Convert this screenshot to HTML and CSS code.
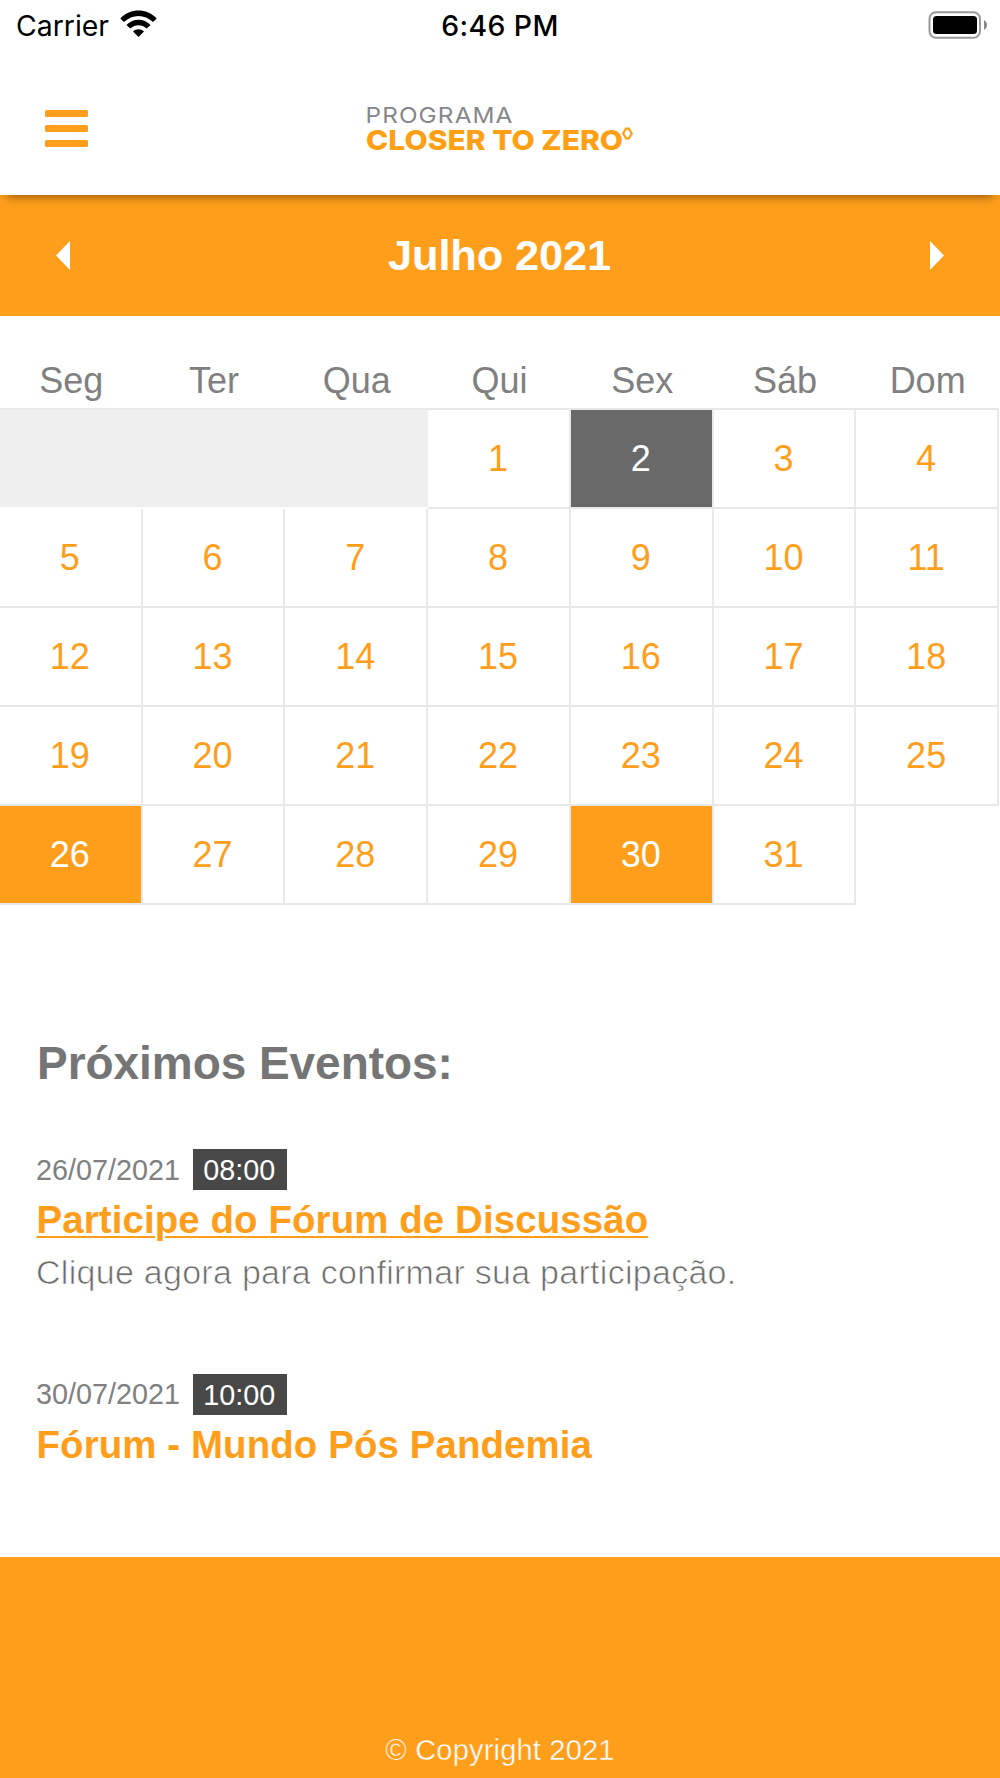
FILE: index.html
```html
<!DOCTYPE html>
<html lang="pt-BR">
<head>
<meta charset="utf-8">
<title>Programa Closer to Zero</title>
<link rel="stylesheet" href="styles.css">
</head>
<body>
<header class="header">
  <div class="status">
    <div class="carrier">
      <span>Carrier</span>
      <svg class="wifi" width="37" height="28" viewBox="0 0 37 28">
        <path d="M0.3 8.4C10.5-2 26.5-2 36.7 8.4L33 12.1C24.7 3.9 12.3 3.9 4 12.1Z"/>
        <path d="M6.5 14.9C13.3 8 23.7 8 30.5 14.9L26.7 18.6C22 14.1 15 14.1 10.3 18.6Z"/>
        <path d="M13 21.4C16.2 18.4 20.8 18.4 24 21.4L18.5 26.9Z"/>
      </svg>
    </div>
    <div class="clock">6:46 PM</div>
    <svg class="battery" width="60" height="28" viewBox="0 0 60 28">
      <rect x="1.5" y="1.2" width="50.5" height="25.6" rx="6.5" fill="none" stroke="#999" stroke-width="2"/>
      <rect x="5" y="5" width="44" height="18" rx="3.5"/>
      <path d="M56 9C60 11.5 60 16.5 56 19Z" fill="#888"/>
    </svg>
  </div>
  <nav class="navbar">
    <button class="menu" aria-label="Menu"><i></i><i></i><i></i></button>
    <svg class="logo" width="270" height="56" viewBox="0 0 270 56">
      <text class="logo-top" x="-1.5" y="22.5" textLength="148" lengthAdjust="spacingAndGlyphs">PROGRAMA</text>
      <text class="logo-main" x="-1" y="50" textLength="257" lengthAdjust="spacingAndGlyphs">CLOSER TO ZERO</text>
      <path d="M259 28.700H261.900L264.700 33.500L261.900 38.300H259L256.200 33.500Z" fill="none" stroke="#ff9f13" stroke-width="2.2"/>
    </svg>
  </nav>
</header>
<main>
  <div class="month">
    <svg width="14" height="29" viewBox="0 0 14 29"><path d="M14 0V29L0 14.5Z"/></svg>
    <h1>Julho 2021</h1>
    <svg width="14" height="29" viewBox="0 0 14 29"><path d="M0 0V29L14 14.5Z"/></svg>
  </div>
  <section class="calendar">
    <div class="weekdays"><span>Seg</span><span>Ter</span><span>Qua</span><span>Qui</span><span>Sex</span><span>Sáb</span><span>Dom</span></div>
    <div class="days">
      <span class="blank"></span><span>1</span><span class="today">2</span><span>3</span><span>4</span>
      <span>5</span><span>6</span><span>7</span><span>8</span><span>9</span><span>10</span><span>11</span>
      <span>12</span><span>13</span><span>14</span><span>15</span><span>16</span><span>17</span><span>18</span>
      <span>19</span><span>20</span><span>21</span><span>22</span><span>23</span><span>24</span><span>25</span>
      <span class="busy">26</span><span>27</span><span>28</span><span>29</span><span class="busy">30</span><span>31</span>
    </div>
  </section>
  <section class="events">
    <h2>Próximos Eventos:</h2>
    <article class="event">
      <div class="when"><span>26/07/2021</span><time>08:00</time></div>
      <h3><a href="#">Participe do Fórum de Discussão</a></h3>
      <p>Clique agora para confirmar sua participação.</p>
    </article>
    <article class="event">
      <div class="when"><span>30/07/2021</span><time>10:00</time></div>
      <h3>Fórum - Mundo Pós Pandemia</h3>
    </article>
  </section>
</main>
<footer class="footer">© Copyright 2021</footer>
</body>
</html>
```
FILE: styles.css
```css
* { box-sizing: border-box; }

body {
  margin: 0;
  height: 1778px;
  display: flex;
  flex-direction: column;
  overflow: hidden;
  background: #fff;
  color: #808080;
  font-family: "Liberation Sans", Arial, sans-serif;
}

h1, h2, h3, p { margin: 0; }

main { flex: 1 1 0; min-height: 0; }

/* Header */
.header {
  position: relative;
  flex: none;
  height: 195px;
  background: #fff;
  box-shadow: 0 8px 10px -7px rgba(0, 0, 0, .5);
}

.status {
  display: grid;
  grid-template-columns: 1fr auto 1fr;
  align-items: center;
  height: 50px;
  padding: 1px 14px 0 16px;
  color: #000;
  font: 400 28.4px/50px Inter, sans-serif;
}

.carrier { display: flex; align-items: center; gap: 11px; }
.wifi { margin-top: -4px; }
.clock { margin-left: -2px; font-weight: 550; letter-spacing: .4px; }
.battery { justify-self: end; margin: -3px -2px 0 0; }

.navbar {
  display: flex;
  align-items: flex-start;
  gap: 279px;
  padding: 50px 45px 0;
}

.menu {
  display: flex;
  flex-direction: column;
  gap: 8px;
  width: 43px;
  margin-top: 10px;
  padding: 0;
  border: 0;
  background: none;
}
.menu i { width: 43px; height: 7px; border-radius: 1.5px; background: #ff9e1b; }

.logo { overflow: visible; }
.logo-top { font: 400 22px Inter, sans-serif; letter-spacing: 1px; fill: #86868a; }
.logo-main { font: 800 27.6px Inter, sans-serif; fill: #ff9f13; }

/* Calendar */
.month {
  display: flex;
  align-items: center;
  justify-content: space-between;
  height: 120.5px;
  padding: 0 56px;
  background: #ff9e1b;
  color: #fff;
  fill: #fff;
}
.month h1 { padding: 0 1px 1px 0; font-size: 43.4px; line-height: 50px; letter-spacing: -.15px; }

.calendar { width: 999px; }

.weekdays {
  display: grid;
  grid-template-columns: repeat(7, 1fr);
  height: 92.5px;
  padding-top: 44px;
  text-align: center;
  font-size: 36px;
  line-height: 41px;
}

.days {
  display: grid;
  grid-template-columns: repeat(7, 1fr);
  grid-auto-rows: 99px;
  border-top: 2px solid #e8e8e8;
}
.days span {
  padding-right: 1px;
  border: solid #e8e8e8;
  border-width: 0 2px 2px 0;
  color: #ff9e1b;
  text-align: center;
  font-size: 36px;
  line-height: 97px;
}
.days .blank { grid-column: span 3; border-color: #fff; border-right: 0; background: #efefef; }
.days .today { background: #696969; color: #fff; }
.days .busy { background: #ff9e1b; color: #fff; }

/* Events */
.events { padding: 132px 36px 0; }
.events h2 { margin-bottom: 59px; padding-left: 1px; color: #757575; font-size: 46px; line-height: 53px; letter-spacing: -.05px; }

.event { height: 224.7px; }

.when { display: flex; align-items: center; gap: 13px; height: 41px; font-size: 28.8px; }
.when > span { padding-top: 1px; }
.when time { padding: 1px 11.5px 0 10px; background: #484848; color: #fff; line-height: 40px; }

.event h3 {
  padding: 7px 0 0 .5px;
  color: #ff9e1b;
  font-size: 38.4px;
  line-height: 46px;
  letter-spacing: .12px;
}
.event a {
  color: inherit;
  text-decoration-thickness: 2px;
  text-underline-offset: 3px;
}

/* A stroke in the background colour thins the letters to a light weight. */
.event p {
  padding-top: 6px;
  color: #6c6c6c;
  font-size: 34px;
  line-height: 46px;
  letter-spacing: .28px;
  -webkit-text-stroke: .7px #fff;
}

.footer {
  flex: none;
  height: 221px;
  padding-top: 176px;
  background: #ff9e1b;
  color: #fff;
  text-align: center;
  font-size: 29px;
  line-height: 34px;
  letter-spacing: .2px;
  -webkit-text-stroke: .4px #ff9e1b;
}
```
